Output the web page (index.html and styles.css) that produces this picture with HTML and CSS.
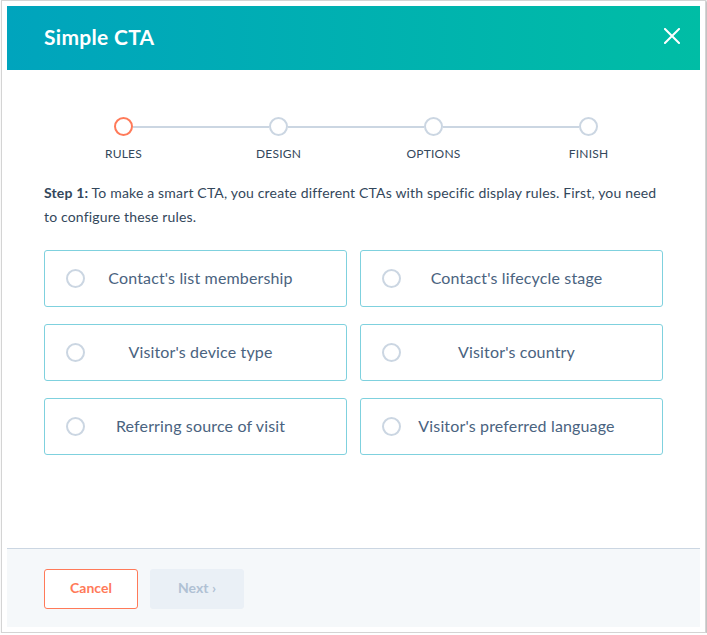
FILE: index.html
```html
<!DOCTYPE html>
<html>
<head>
<meta charset="utf-8">
<title>Simple CTA</title>
<link rel="stylesheet" href="styles.css">
</head>
<body>
<div class="screen">
  <div class="modal">
    <header class="modal-header">
      <h1 class="modal-title">Simple CTA</h1>
      <button class="close" aria-label="Close">
        <svg width="16" height="16" viewBox="0 0 16 16"><path d="M1 1 L15 15 M15 1 L1 15" stroke="#fff" stroke-width="2" fill="none" stroke-linecap="square"/></svg>
      </button>
    </header>
    <main class="modal-body">
      <div class="stepper">
        <div class="step-track">
          <span class="dot dot-active"></span>
          <span class="track-line"></span>
          <span class="dot"></span>
          <span class="track-line"></span>
          <span class="dot"></span>
          <span class="track-line"></span>
          <span class="dot"></span>
        </div>
        <div class="step-labels">
          <span>Rules</span>
          <span>Design</span>
          <span>Options</span>
          <span>Finish</span>
        </div>
      </div>
      <p class="intro"><strong>Step 1:</strong> To make a smart CTA, you create different CTAs with specific display rules. First, you need to configure these rules.</p>
      <div class="options">
        <label class="option"><span class="radio"></span><span class="option-text">Contact's list membership</span></label>
        <label class="option"><span class="radio"></span><span class="option-text">Contact's lifecycle stage</span></label>
        <label class="option"><span class="radio"></span><span class="option-text">Visitor's device type</span></label>
        <label class="option"><span class="radio"></span><span class="option-text">Visitor's country</span></label>
        <label class="option"><span class="radio"></span><span class="option-text">Referring source of visit</span></label>
        <label class="option"><span class="radio"></span><span class="option-text">Visitor's preferred language</span></label>
      </div>
    </main>
    <footer class="modal-footer">
      <button class="btn btn-cancel">Cancel</button>
      <button class="btn btn-next" disabled>Next ›</button>
    </footer>
  </div>
</div>
</body>
</html>
```
FILE: styles.css
```css
* { box-sizing: border-box; }
html, body { margin: 0; padding: 0; background: #fff; }
body { font-family: Lato, "Open Sans", sans-serif; color: #33475b; }

.screen {
  width: 705px;
  height: 633px;
  margin-left: 1px;
  border: 1px solid #d4d4d4;
  box-shadow: 1px 1px 2px rgba(0,0,0,0.35);
  padding: 5px 0 0 5px;
  background: #fff;
}

.modal {
  width: 693px;
  height: 621px;
  display: flex;
  flex-direction: column;
  background: #fff;
}

.modal-header {
  height: 64px;
  flex: none;
  background: linear-gradient(to right, #00a4bd, #00bda5);
  display: flex;
  align-items: center;
  justify-content: space-between;
  padding: 0 20px 4px 37px;
}
.modal-title {
  margin: 0;
  color: #fff;
  font-size: 21px;
  font-weight: 700;
  letter-spacing: 0.3px;
}
.close {
  border: 0;
  background: none;
  padding: 0;
  width: 16px;
  height: 16px;
  display: block;
}
.close svg { display: block; }

.modal-body {
  flex: 1;
  padding: 0 37px;
}

.stepper { margin-top: 47px; }
.step-track {
  display: flex;
  align-items: center;
  margin: 0 65px 0 70px;
}
.dot {
  width: 19px;
  height: 19px;
  border-radius: 50%;
  border: 2px solid #cbd6e2;
  flex: none;
}
.dot-active { border-color: #ff7a59; }
.track-line {
  flex: 1;
  height: 2px;
  background: #cbd6e2;
}
.step-labels {
  display: grid;
  grid-template-columns: repeat(4, 155px);
  margin: 10px 0 0 2px;
  font-size: 12px;
  line-height: 16px;
  text-transform: uppercase;
  text-align: center;
  color: #33475b;
  letter-spacing: 0.2px;
}

.intro {
  margin: 19px 0 0;
  font-size: 14px;
  line-height: 24px;
  color: #33475b;
  letter-spacing: 0.17px;
}
.intro strong { font-weight: 700; }

.options {
  display: grid;
  grid-template-columns: 303px 303px;
  column-gap: 13px;
  row-gap: 17px;
  margin-top: 21px;
}
.option {
  height: 57px;
  border: 1px solid #7fd1de;
  border-radius: 3px;
  display: flex;
  align-items: center;
  padding: 0 30px 0 21px;
}
.radio {
  width: 19px;
  height: 19px;
  border-radius: 50%;
  border: 2px solid #cbd6e2;
  flex: none;
}
.option-text {
  flex: 1;
  text-align: center;
  font-size: 16px;
  line-height: 20px;
  padding-bottom: 2px;
  color: #4a6380;
  letter-spacing: 0.15px;
}

.modal-footer {
  flex: none;
  height: 79px;
  border-top: 1px solid #cbd6e2;
  background: #f5f8fa;
  display: flex;
  align-items: flex-start;
  gap: 12px;
  padding: 20px 37px 0;
}
.btn {
  width: 94px;
  height: 40px;
  border-radius: 3px;
  font-family: Lato, "Open Sans", sans-serif;
  font-size: 14px;
  font-weight: 700;
  padding: 0 0 3px;
}
.btn-cancel {
  background: #fff;
  border: 1px solid #ff7a59;
  color: #ff7a59;
}
.btn-next {
  background: #eaf0f6;
  border: 1px solid #eaf0f6;
  color: #b0c1d4;
}
```
